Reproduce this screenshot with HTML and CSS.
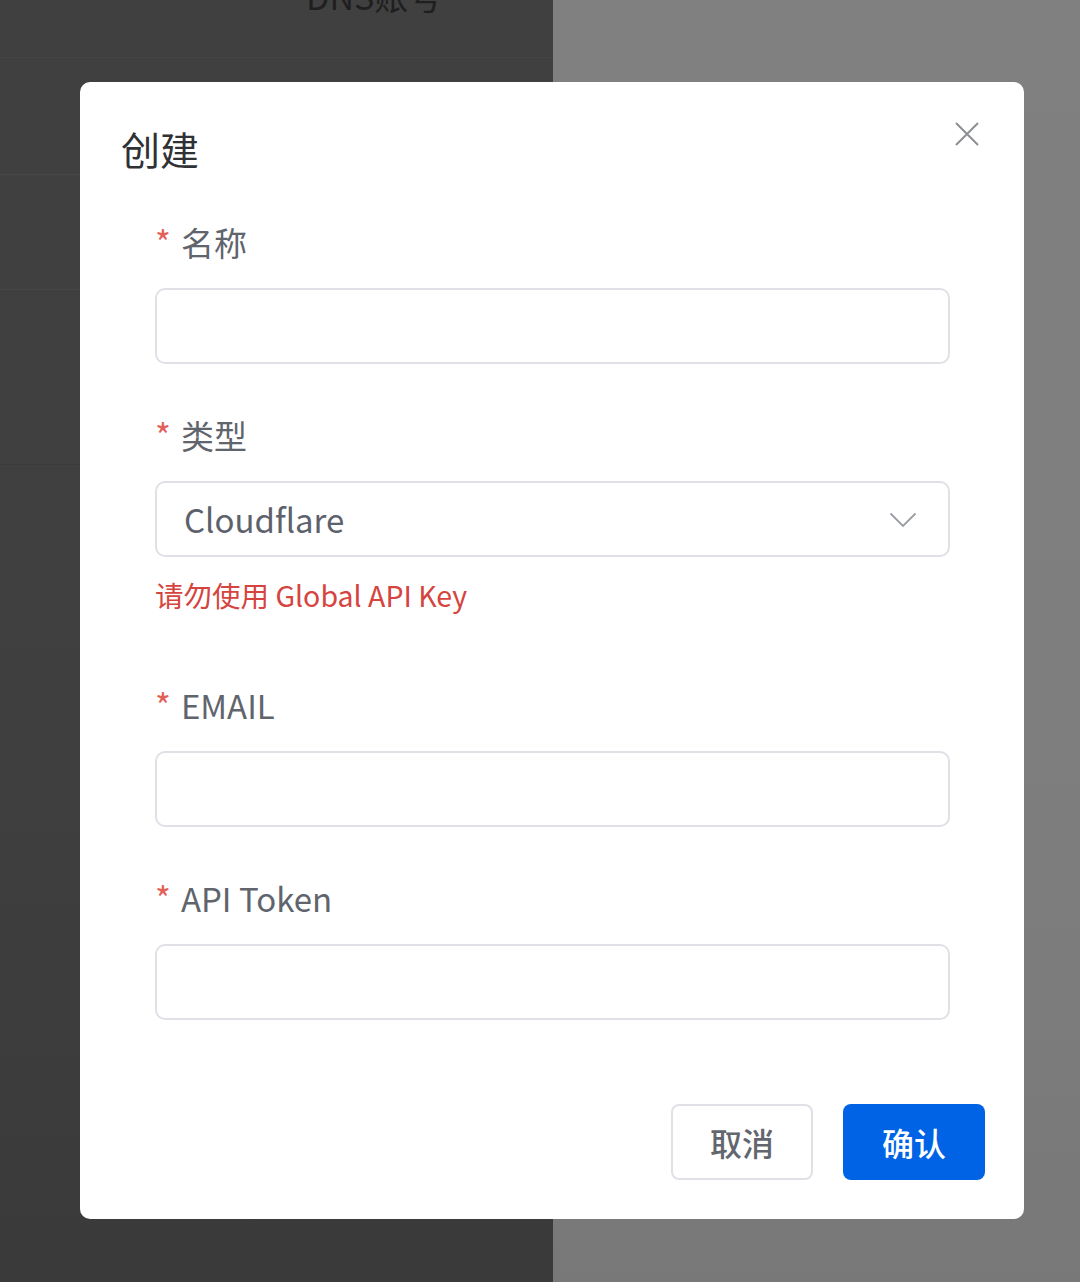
FILE: index.html
```html
<!DOCTYPE html>
<html lang="zh-CN">

<head>
    <meta charset="UTF-8">
    <meta name="viewport" content="width=device-width, initial-scale=1.0">
    <title>DNS账号</title>
    <link rel="stylesheet" href="styles.css">
</head>

<body>
    <div class="page">
        <div class="page-main">
            <div class="page-header">DNS账号</div>
            <div class="page-row row-1"></div>
            <div class="page-row row-2"></div>
            <div class="page-row row-3"></div>
            <div class="page-rest"></div>
        </div>
        <div class="page-side"></div>
    </div>

    <div class="modal-mask">
        <div class="modal">
            <div class="modal-head">
                <div class="modal-title">创建</div>
                <button type="button" class="modal-close" aria-label="关闭">
                    <svg width="26" height="26" viewBox="0 0 26 26">
                        <path d="M2 2 L24 24 M24 2 L2 24" stroke="#8c8f96" stroke-width="2" fill="none" />
                    </svg>
                </button>
            </div>

            <form class="dns-form">
                <div class="form-item">
                    <label class="form-label" for="dns-name"><span class="req">*</span>名称</label>
                    <input type="text" id="dns-name" class="form-input">
                </div>

                <div class="form-item">
                    <label class="form-label"><span class="req">*</span>类型</label>
                    <div class="form-select">
                        <span class="select-value">Cloudflare</span>
                        <svg class="select-arrow" width="28" height="16" viewBox="0 0 28 16">
                            <path d="M1.5 1.5 L14 14 L26.5 1.5" stroke="#9a9da4" stroke-width="1.8" fill="none" />
                        </svg>
                    </div>
                    <div class="form-tip">请勿使用 Global API Key</div>
                </div>

                <div class="form-item">
                    <label class="form-label" for="dns-email"><span class="req">*</span>EMAIL</label>
                    <input type="text" id="dns-email" class="form-input">
                </div>

                <div class="form-item">
                    <label class="form-label" for="dns-token"><span class="req">*</span>API Token</label>
                    <input type="text" id="dns-token" class="form-input">
                </div>
            </form>

            <div class="modal-foot">
                <button type="button" class="btn btn-cancel">取消</button>
                <button type="button" class="btn btn-ok">确认</button>
            </div>
        </div>
    </div>
</body>

</html>
```

FILE: styles.css
```css
body {
    margin: 0;
    font-family: 'Noto Sans CJK SC', 'Noto Sans', sans-serif;
    background: #7c7c7c;
    overflow: hidden;
}

.page {
    display: flex;
    min-height: 100vh;
}

.page-main {
    width: 553px;
    display: flex;
    flex-direction: column;
    background: linear-gradient(#404040, #3f3f3f 60%, #3a3a3a);
}

.page-side {
    flex: 1;
    background: linear-gradient(#808080, #7d7d7d 70%, #787878);
}

.page-header {
    height: 58px;
    overflow: hidden;
    box-sizing: border-box;
    padding-left: 306px;
    padding-bottom: 44px;
    border-bottom: 1px solid #444;
    display: flex;
    align-items: flex-end;
    font-size: 34px;
    line-height: 34px;
    color: #1f1f1f;
}

.page-row {
    border-bottom: 1px solid #474747;
}

.row-1 {
    height: 116px;
}

.row-2 {
    height: 114px;
}

.row-3 {
    height: 174px;
    border-bottom-color: #3b3b3b;
}

.page-rest {
    flex: 1;
}

.modal-mask {
    position: fixed;
    inset: 0;
    padding: 82px 56px 0 80px;
}

.modal {
    background: #fff;
    border-radius: 10px;
    width: 944px;
    box-sizing: border-box;
    padding: 40px 39px 39px 41px;
}

.modal-head {
    display: flex;
    justify-content: space-between;
    align-items: flex-start;
}

.modal-title {
    font-size: 39px;
    line-height: 52px;
    color: #2f3135;
}

.modal-close {
    border: none;
    background: none;
    padding: 0;
    margin: -1px 5px 0 0;
    width: 26px;
    height: 26px;
    cursor: pointer;
}

.dns-form {
    padding: 44px 35px 0 34px;
}

.form-item {
    margin-bottom: 47px;
}

.form-item:last-child {
    margin-bottom: 0;
}

.form-label {
    display: block;
    font-size: 33px;
    line-height: 48px;
    color: #60646c;
    margin-bottom: 22px;
}

.req {
    color: #e2605a;
    font-size: 34px;
    margin-right: 10px;
}

.form-input,
.form-select {
    display: block;
    width: 100%;
    height: 76px;
    box-sizing: border-box;
    border: 2px solid #dfe1e6;
    border-radius: 10px;
    background: #fff;
    font-family: inherit;
    font-size: 33px;
    outline: none;
}

.form-select {
    display: flex;
    align-items: center;
    justify-content: space-between;
    padding: 0 31px 0 27px;
}

.select-value {
    color: #5c616b;
    font-size: 33px;
}

.select-arrow {
    margin-top: 1px;
}

/* 提示文字的下边距会和 .form-item 的下边距合并 */
.form-tip {
    margin-top: 18px;
    margin-bottom: 66px;
    font-size: 28.5px;
    line-height: 40px;
    color: #d5443e;
}

.modal-foot {
    display: flex;
    justify-content: flex-end;
    gap: 30px;
    margin-top: 84px;
}

.btn {
    width: 142px;
    height: 76px;
    border-radius: 8px;
    font-family: inherit;
    font-size: 32px;
    font-weight: 500;
    cursor: pointer;
}

.btn-cancel {
    background: #fff;
    border: 2px solid #dfe1e6;
    color: #62666e;
}

.btn-ok {
    background: #0063e6;
    border: none;
    color: #fff;
}
```
